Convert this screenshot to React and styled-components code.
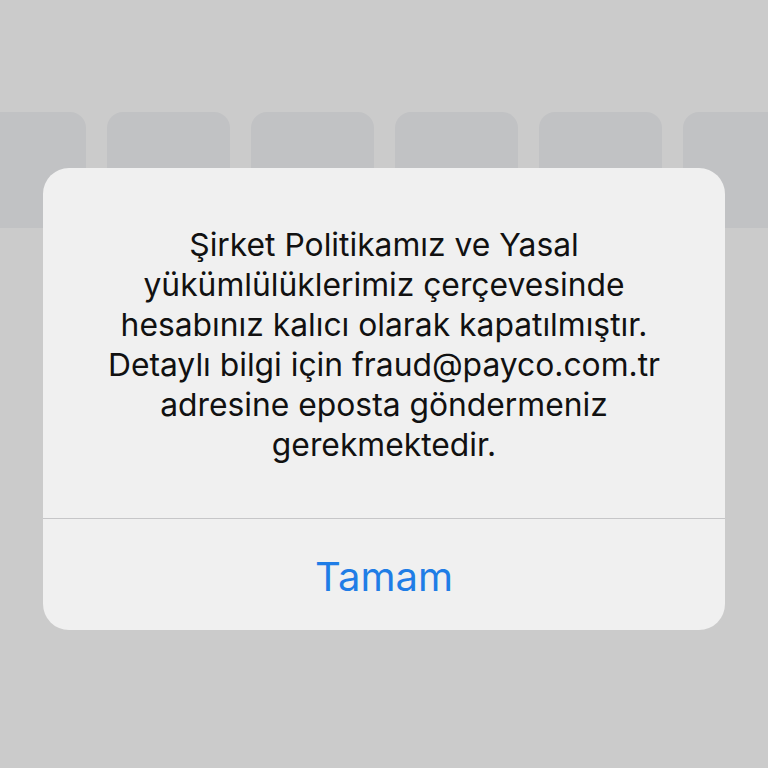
import React from "react";
import styled, { createGlobalStyle } from "styled-components";

const Global = createGlobalStyle`
  html, body {
    margin: 0;
    padding: 0;
    background: #cbcbcb;
  }
  * { box-sizing: border-box; }
`;

const Screen = styled.div`
  position: relative;
  width: 768px;
  height: 768px;
  overflow: hidden;
  background: #cbcbcb;
  font-family: Inter, "Noto Sans", "Liberation Sans", sans-serif;
`;

const TileRow = styled.div`
  display: flex;
  gap: 21px;
  margin-top: 112px;
  margin-left: -37px;
  height: 116px;
`;

const Tile = styled.div`
  flex: 0 0 123px;
  height: 116px;
  border-radius: 16px;
  background: #c1c2c4;
`;

const Overlay = styled.div`
  position: absolute;
  inset: 0;
  display: flex;
  justify-content: center;
  padding-top: 168px;
`;

const Dialog = styled.div`
  width: 682px;
  height: 462px;
  border-radius: 26px;
  background: #f0f0f0;
  display: flex;
  flex-direction: column;
  overflow: hidden;
`;

const Message = styled.div`
  height: 351px;
  padding-top: 57px;
  text-align: center;
  color: #111;
  font-size: 31.8px;
  line-height: 40px;
  border-bottom: 1px solid #c6c6c8;
`;

const Button = styled.button`
  flex: 1;
  border: none;
  background: transparent;
  color: #1f7de6;
  font-family: inherit;
  font-size: 40px;
  padding: 4px 0 0;
  cursor: pointer;
`;

export default function App() {
  const lines = [
    "Şirket Politikamız ve Yasal",
    "yükümlülüklerimiz çerçevesinde",
    "hesabınız kalıcı olarak kapatılmıştır.",
    "Detaylı bilgi için fraud@payco.com.tr",
    "adresine eposta göndermeniz",
    "gerekmektedir.",
  ];
  return (
    <>
      <Global />
      <Screen>
        <TileRow>
          {[0, 1, 2, 3, 4, 5].map((i) => (
            <Tile key={i} />
          ))}
        </TileRow>
        <Overlay>
          <Dialog>
            <Message>
              {lines.map((l) => (
                <div key={l}>{l}</div>
              ))}
            </Message>
            <Button>Tamam</Button>
          </Dialog>
        </Overlay>
      </Screen>
    </>
  );
}
